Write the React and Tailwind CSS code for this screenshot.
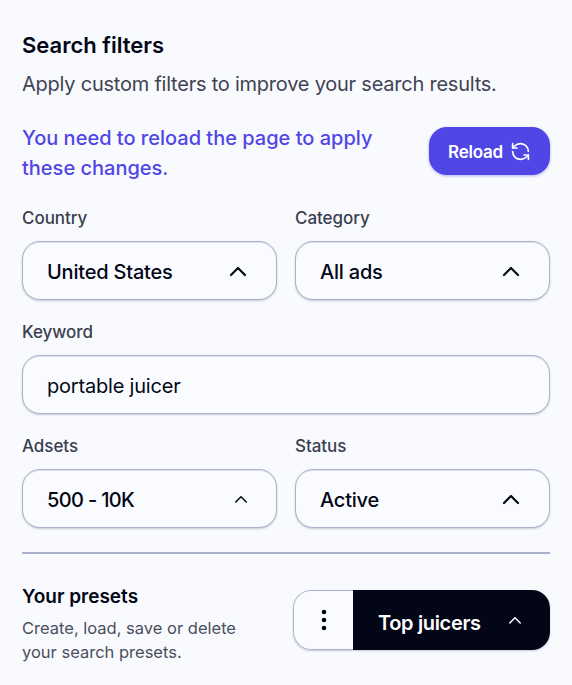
import React from "react";

const Chevron = ({ className = "", w = 2.2 }) => (
  <svg viewBox="0 0 24 24" fill="none" stroke="currentColor" strokeWidth={w} strokeLinecap="round" strokeLinejoin="round" className={className}>
    <path d="M5 16l7-7 7 7" />
  </svg>
);

const Field = ({ label, children }) => (
  <div className="flex flex-col gap-[11px]">
    <span className="text-[17px] leading-[24px] font-medium text-[#3a3f50] tracking-[-0.05px]">{label}</span>
    {children}
  </div>
);

const Select = ({ value, small }) => (
  <div className="h-[59px] pl-[24px] pr-[28px] flex items-center justify-between bg-[#fafbfe] border border-[#a9b1cb] rounded-[18px] shadow-[inset_0_1px_0_#dde1ec,0_1px_2px_rgba(80,90,130,0.3)]">
    <span className={small ? "pt-[3px] text-[20px] font-medium text-[#030617] tracking-[-0.65px]" : "pt-[3px] text-[20px] font-medium text-[#030617] tracking-[-0.2px]"}>{value}</span>
    {small ? <Chevron className="w-[18px] h-[18px] text-[#030617] mr-[-2px]" w={2} /> : <Chevron className="w-[24px] h-[24px] text-[#030617] mr-[-2px]" />}
  </div>
);

export default function App() {
  return (
    <div className="w-[572px] h-[685px] overflow-hidden bg-[#f9fafd] px-[22px] pt-[28px] font-['Inter',sans-serif]">
      <h2 className="text-[22px] leading-[34px] font-semibold text-[#030617]">Search filters</h2>
      <p className="mt-[7px] text-[20px] leading-[30px] text-[#3f4354] tracking-[-0.23px]">Apply custom filters to improve your search results.</p>
      <div className="mt-[24px] flex items-center justify-between">
        <p className="w-[380px] text-[20px] leading-[30px] font-medium text-[#5046e5]">You need to reload the page to apply these changes.</p>
        <button className="w-[121px] h-[48px] mt-[-4px] flex items-center justify-center gap-[7px] rounded-[18px] bg-[#5046e5] text-white text-[17px] font-semibold tracking-[-0.2px] shadow-[0_1px_3px_rgba(80,70,229,0.4)]">
          <span className="pt-[3px]">Reload</span>
          <svg viewBox="0 0 24 24" fill="none" stroke="currentColor" strokeWidth="1.9" strokeLinecap="round" strokeLinejoin="round" className="w-[21px] h-[21px]">
            <path d="M21 12a9 9 0 0 0-9-9 9.75 9.75 0 0 0-6.74 2.74L3 8" />
            <path d="M3 3v5h5" />
            <path d="M3 12a9 9 0 0 0 9 9 9.75 9.75 0 0 0 6.74-2.74L21 16" />
            <path d="M16 16h5v5" />
          </svg>
        </button>
      </div>
      <div className="mt-[23px] flex flex-col gap-[20px]">
        <div className="grid grid-cols-2 gap-x-[18px]">
          <Field label="Country"><Select value="United States" /></Field>
          <Field label="Category"><Select value="All ads" /></Field>
        </div>
        <Field label="Keyword">
          <div className="h-[59px] pl-[24px] pt-[3px] flex items-center bg-[#fafbfe] border border-[#a9b1cb] rounded-[18px] shadow-[inset_0_1px_0_#dde1ec,0_1px_2px_rgba(80,90,130,0.3)] text-[20px] text-[#030617] tracking-[-0.2px]">portable juicer</div>
        </Field>
        <div className="grid grid-cols-2 gap-x-[18px]">
          <Field label="Adsets"><Select value="500 - 10K" small /></Field>
          <Field label="Status"><Select value="Active" /></Field>
        </div>
      </div>
      <div className="mt-[24px] h-[2px] bg-[#a9b1cb]" />
      <div className="mt-[36px] flex items-start justify-between">
        <div>
          <div className="text-[19px] leading-[28px] font-semibold text-[#030617] mt-[-7px]">Your presets</div>
          <p className="mt-[5px] text-[16.5px] leading-[24px] text-[#4a4f60] w-[240px]">Create, load, save or delete your search presets.</p>
        </div>
        <div className="flex h-[60px] w-[257px] rounded-[18px] shadow-[0_1px_2px_rgba(80,90,130,0.3)] overflow-hidden">
          <div className="w-[60px] flex items-center justify-center bg-[#fafbfe] border border-r-0 border-[#a9b1cb] rounded-l-[18px]">
            <svg viewBox="0 0 24 24" fill="#030617" className="w-[24px] h-[24px]">
              <circle cx="12" cy="4" r="2.3" />
              <circle cx="12" cy="12" r="2.3" />
              <circle cx="12" cy="20" r="2.3" />
            </svg>
          </div>
          <div className="flex-1 flex items-center justify-between bg-[#030617] pl-[25px] pr-[26px] text-white">
            <span className="pt-[5px] text-[20px] font-semibold tracking-[-0.35px]">Top juicers</span>
            <Chevron className="w-[18px] h-[18px]" w={2} />
          </div>
        </div>
      </div>
    </div>
  );
}
